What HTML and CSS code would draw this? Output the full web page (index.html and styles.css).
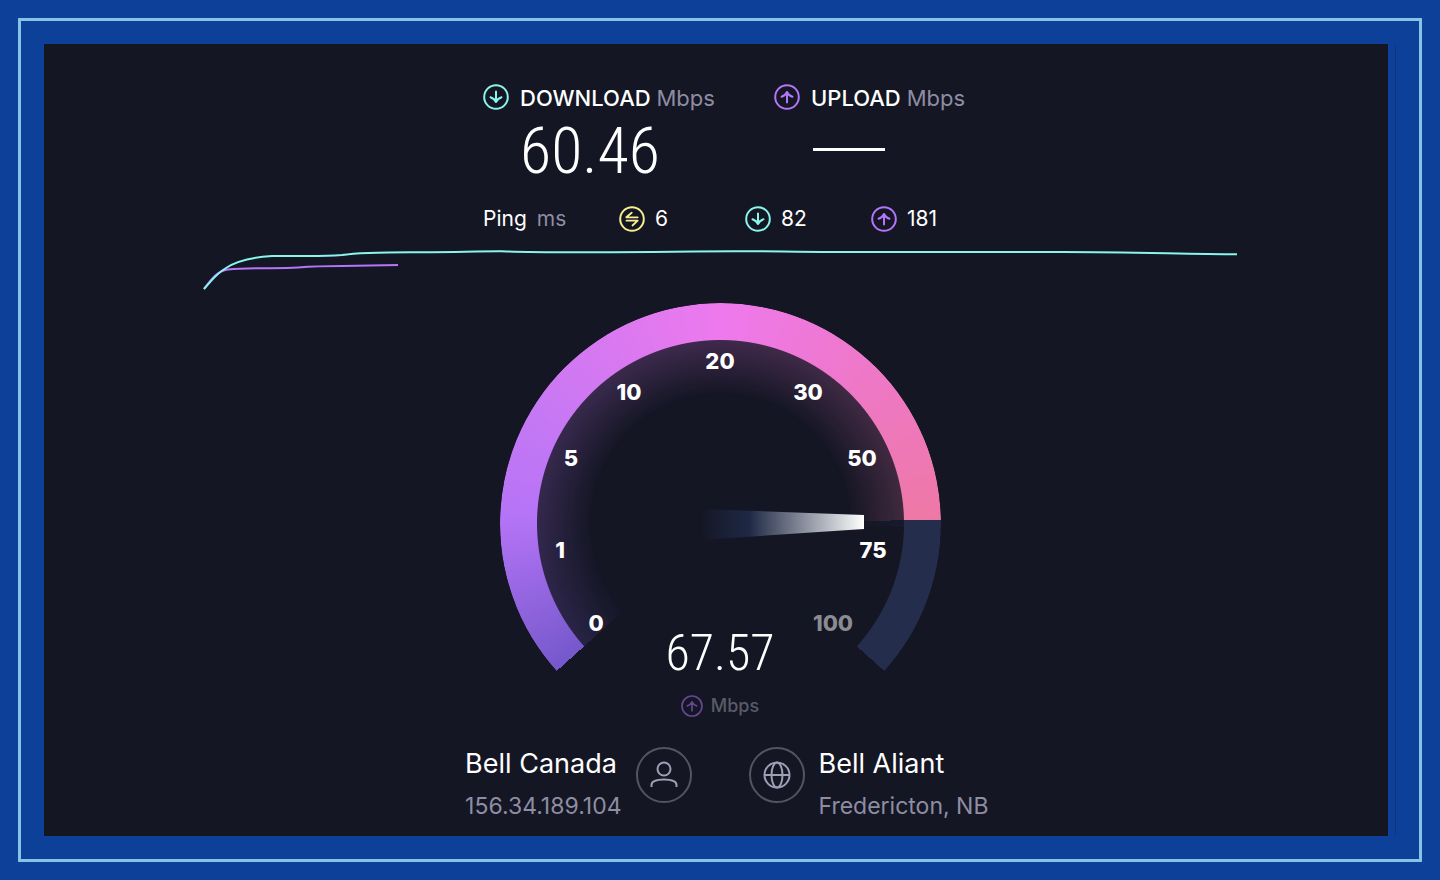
FILE: index.html
```html
<!DOCTYPE html>
<html lang="en">
<head>
    <meta charset="UTF-8">
    <meta name="viewport" content="width=device-width, initial-scale=1.0">
    <title>Speed Test</title>
    <link rel="stylesheet" href="styles.css">
</head>
<body>
    <svg class="symbols" aria-hidden="true">
        <symbol id="down" viewBox="0 0 26 26">
            <circle cx="13" cy="13" r="11.8"/>
            <path d="M13 7.500v10.500M7.500 13.200 Q11.500 14.500 13 18 Q14.500 14.500 18.500 13.200"/>
        </symbol>
        <symbol id="up" viewBox="0 0 26 26">
            <circle cx="13" cy="13" r="11.8"/>
            <path d="M13 18.500V8M7.500 12.800 Q11.500 11.500 13 8 Q14.500 11.500 18.500 12.800"/>
        </symbol>
        <symbol id="swap" viewBox="0 0 26 26">
            <circle cx="13" cy="13" r="11.8"/>
            <path stroke-width="1.8" d="M12.700 6.700 7.300 11.300H18.700M7.500 14.700H18.700L13.500 19.500"/>
        </symbol>
    </svg>

    <div class="frame">
        <div class="backing">
            <main class="panel">
                <section class="results">
                    <div class="result">
                        <svg class="icon download"><use href="#down"/></svg>
                        <h2>DOWNLOAD <span>Mbps</span></h2>
                        <p class="speed">60.46</p>
                    </div>
                    <div class="result">
                        <svg class="icon upload"><use href="#up"/></svg>
                        <h2>UPLOAD <span>Mbps</span></h2>
                        <p class="speed"><i class="dash"></i></p>
                    </div>
                </section>

                <section class="ping">
                    <p>Ping <span>ms</span></p>
                    <p><svg class="icon idle"><use href="#swap"/></svg>6</p>
                    <p><svg class="icon download"><use href="#down"/></svg>82</p>
                    <p><svg class="icon upload"><use href="#up"/></svg>181</p>
                </section>

                <svg class="chart" viewBox="0 0 1036 46">
                    <path class="upload" d="M2 43C8 35 14 25 26 23.500C50 21 75 23 96 21.500C115 20 125 20 140 20L196 19"/>
                    <path class="download" d="M2 43C10 34 14 28 24 22C36 14 54 11 70 10C95 9.500 115 11 140 9C160 6 185 6 220 6.200C270 6.500 275 5 300 5.200C340 7 400 6 450 6C560 4 570 6 630 6C700 6 780 5.500 860 6C930 6 980 8 1035 8.300"/>
                </svg>

                <section class="gauge">
                    <div class="track"></div>
                    <div class="fill"></div>
                    <svg class="dial" viewBox="0 0 440 440">
                        <defs>
                            <linearGradient id="needle">
                                <stop offset="0" stop-color="#1e2946" stop-opacity="0"/>
                                <stop offset=".3" stop-color="#1f2945"/>
                                <stop offset="1" stop-color="#fff"/>
                            </linearGradient>
                        </defs>
                        <path fill="url(#needle)" d="M200 206 364 212V226L200 237Z"/>
                        <text x="96" y="328">0</text>
                        <text x="60" y="255">1</text>
                        <text x="71" y="163">5</text>
                        <text x="129" y="97">10</text>
                        <text x="220" y="66">20</text>
                        <text x="308" y="97">30</text>
                        <text x="362" y="163">50</text>
                        <text x="373" y="255">75</text>
                        <text x="333" y="328" class="off">100</text>
                    </svg>
                    <div class="reading">
                        <p class="current">67.57</p>
                        <p class="unit"><svg class="icon upload"><use href="#up"/></svg>Mbps</p>
                    </div>
                </section>

                <footer class="hosts">
                    <div class="host client">
                        <div>
                            <h3>Bell Canada</h3>
                            <p>156.34.189.104</p>
                        </div>
                        <svg class="badge" viewBox="0 0 56 56">
                            <circle class="ring" cx="28" cy="28" r="27"/>
                            <circle cx="28" cy="22" r="6.500"/>
                            <path d="M15.500 40v-2c0-4 5-5.500 12.500-5.500s12.500 1.500 12.500 5.500v2"/>
                        </svg>
                    </div>
                    <div class="host server">
                        <svg class="badge" viewBox="0 0 56 56">
                            <circle class="ring" cx="28" cy="28" r="27"/>
                            <circle cx="28" cy="28" r="12.500"/>
                            <ellipse cx="28" cy="28" rx="5.500" ry="12.500"/>
                            <path d="M15.500 28h25"/>
                        </svg>
                        <div>
                            <h3>Bell Aliant</h3>
                            <p>Fredericton, NB</p>
                        </div>
                    </div>
                </footer>
            </main>
        </div>
    </div>
</body>
</html>
```
FILE: styles.css
```css
* {
    box-sizing: border-box;
}
body {
    margin: 0;
    padding: 18px;
    min-height: 100vh;
    display: flex;
    background: #0d4098;
    color: #fff;
    font-family: Inter, "Open Sans", sans-serif;
}
h2, h3, p {
    margin: 0;
    font-weight: 400;
}
.symbols {
    position: absolute;
    width: 0;
    height: 0;
}
.frame {
    flex: 1;
    display: flex;
    padding: 23px;
    border: 3px solid #85c5e3;
}
.backing {
    flex: 1;
    display: flex;
    padding-right: 7px;
    border-right: 1px solid #0b3585;
}
.panel {
    flex: 1;
    display: flex;
    flex-direction: column;
    align-items: center;
    padding: 40px 0 12px 8px;
    background: #141624;
}
.icon {
    width: 26px;
    height: 26px;
    fill: none;
    stroke: currentColor;
    stroke-width: 2;
    stroke-linecap: round;
    stroke-linejoin: round;
}
.download {
    color: #8af5ec;
}
.upload {
    color: #b575f8;
}
.idle {
    color: #f7ee8e;
}

/* Top results */
.results {
    display: grid;
    grid-template-columns: 291px 183px;
    width: 474px;
}
.result {
    display: grid;
    grid-template-columns: 26px 1fr;
    column-gap: 11px;
}
.result h2 {
    font-size: 22px;
    line-height: 28px;
    font-weight: 500;
    white-space: nowrap;
}
.result h2 span, .ping span {
    color: #8e8da3;
    font-weight: 400;
}
.speed {
    grid-column: 2;
    height: 80px;
    font-family: "Roboto Condensed", Roboto, sans-serif;
    font-size: 64px;
    line-height: 80px;
    font-weight: 300;
}
.dash {
    display: block;
    width: 72px;
    height: 3px;
    margin: 36px 0 0 2px;
    background: #fff;
}

.ping {
    display: grid;
    grid-template-columns: 136px 126px 126px 86px;
    width: 474px;
    margin-top: 14px;
    font-size: 21px;
    line-height: 26px;
}
.ping p {
    display: flex;
    gap: 10px;
}

.chart {
    width: 100%;
    max-width: 1036px;
    margin: 14px 0 11px;
    fill: none;
    stroke: currentColor;
    stroke-width: 2;
}
.chart path {
    stroke: currentColor;
}

/* Gauge */
.gauge {
    position: relative;
    width: 440px;
    height: 444px;
}
.track, .fill {
    position: absolute;
    top: 0;
    left: 0;
    width: 441px;
    height: 441px;
    border-radius: 50%;
}
.track {
    background: conic-gradient(from 91deg, #242d4b 41deg, transparent 41deg);
    mask: radial-gradient(circle, transparent 183px, #000 184px);
}
.fill {
    background: conic-gradient(from 228deg, #7558cb 0deg, #b574f7 44deg, #c878f3 76deg, #ee79ed 132deg, #ee78c8 175deg, #ee78a5 221deg, #242d4b 221deg, #242d4b 223deg, transparent 223deg);
    mask: radial-gradient(circle, transparent 128px, rgba(0, 0, 0, .1) 155px, rgba(0, 0, 0, .2) 183px, #000 184px);
}
.dial {
    position: absolute;
    top: 0;
    left: 0;
    width: 440px;
    height: 440px;
}
.dial text {
    fill: #fff;
    font-size: 22px;
    font-weight: 800;
    text-anchor: middle;
}
.dial .off {
    fill: #8b8b91;
}
.reading {
    position: absolute;
    top: 320px;
    left: 0;
    width: 100%;
    text-align: center;
}
.current {
    font-family: "Roboto Condensed", Roboto, sans-serif;
    font-size: 50px;
    line-height: 60px;
    font-weight: 300;
}
.unit {
    display: flex;
    justify-content: center;
    align-items: center;
    gap: 8px;
    margin-top: 10px;
    font-size: 18px;
    line-height: 26px;
    font-weight: 500;
    color: #5a5a68;
}
.unit .icon {
    width: 22px;
    height: 22px;
    color: #684693;
}

/* Client and server */
.hosts {
    display: grid;
    grid-template-columns: 1fr 1fr;
    gap: 57px;
    width: 100%;
}
.host {
    display: flex;
    gap: 14px;
}
.client {
    justify-content: flex-end;
}
.host h3 {
    font-size: 27px;
    line-height: 34px;
}
.host p {
    margin-top: 8px;
    font-size: 23px;
    line-height: 34px;
    color: #8e8da3;
}
.badge {
    width: 56px;
    height: 56px;
    fill: none;
    stroke: #9f9eb3;
    stroke-width: 2;
}
.badge .ring {
    stroke: #54545f;
}
```
